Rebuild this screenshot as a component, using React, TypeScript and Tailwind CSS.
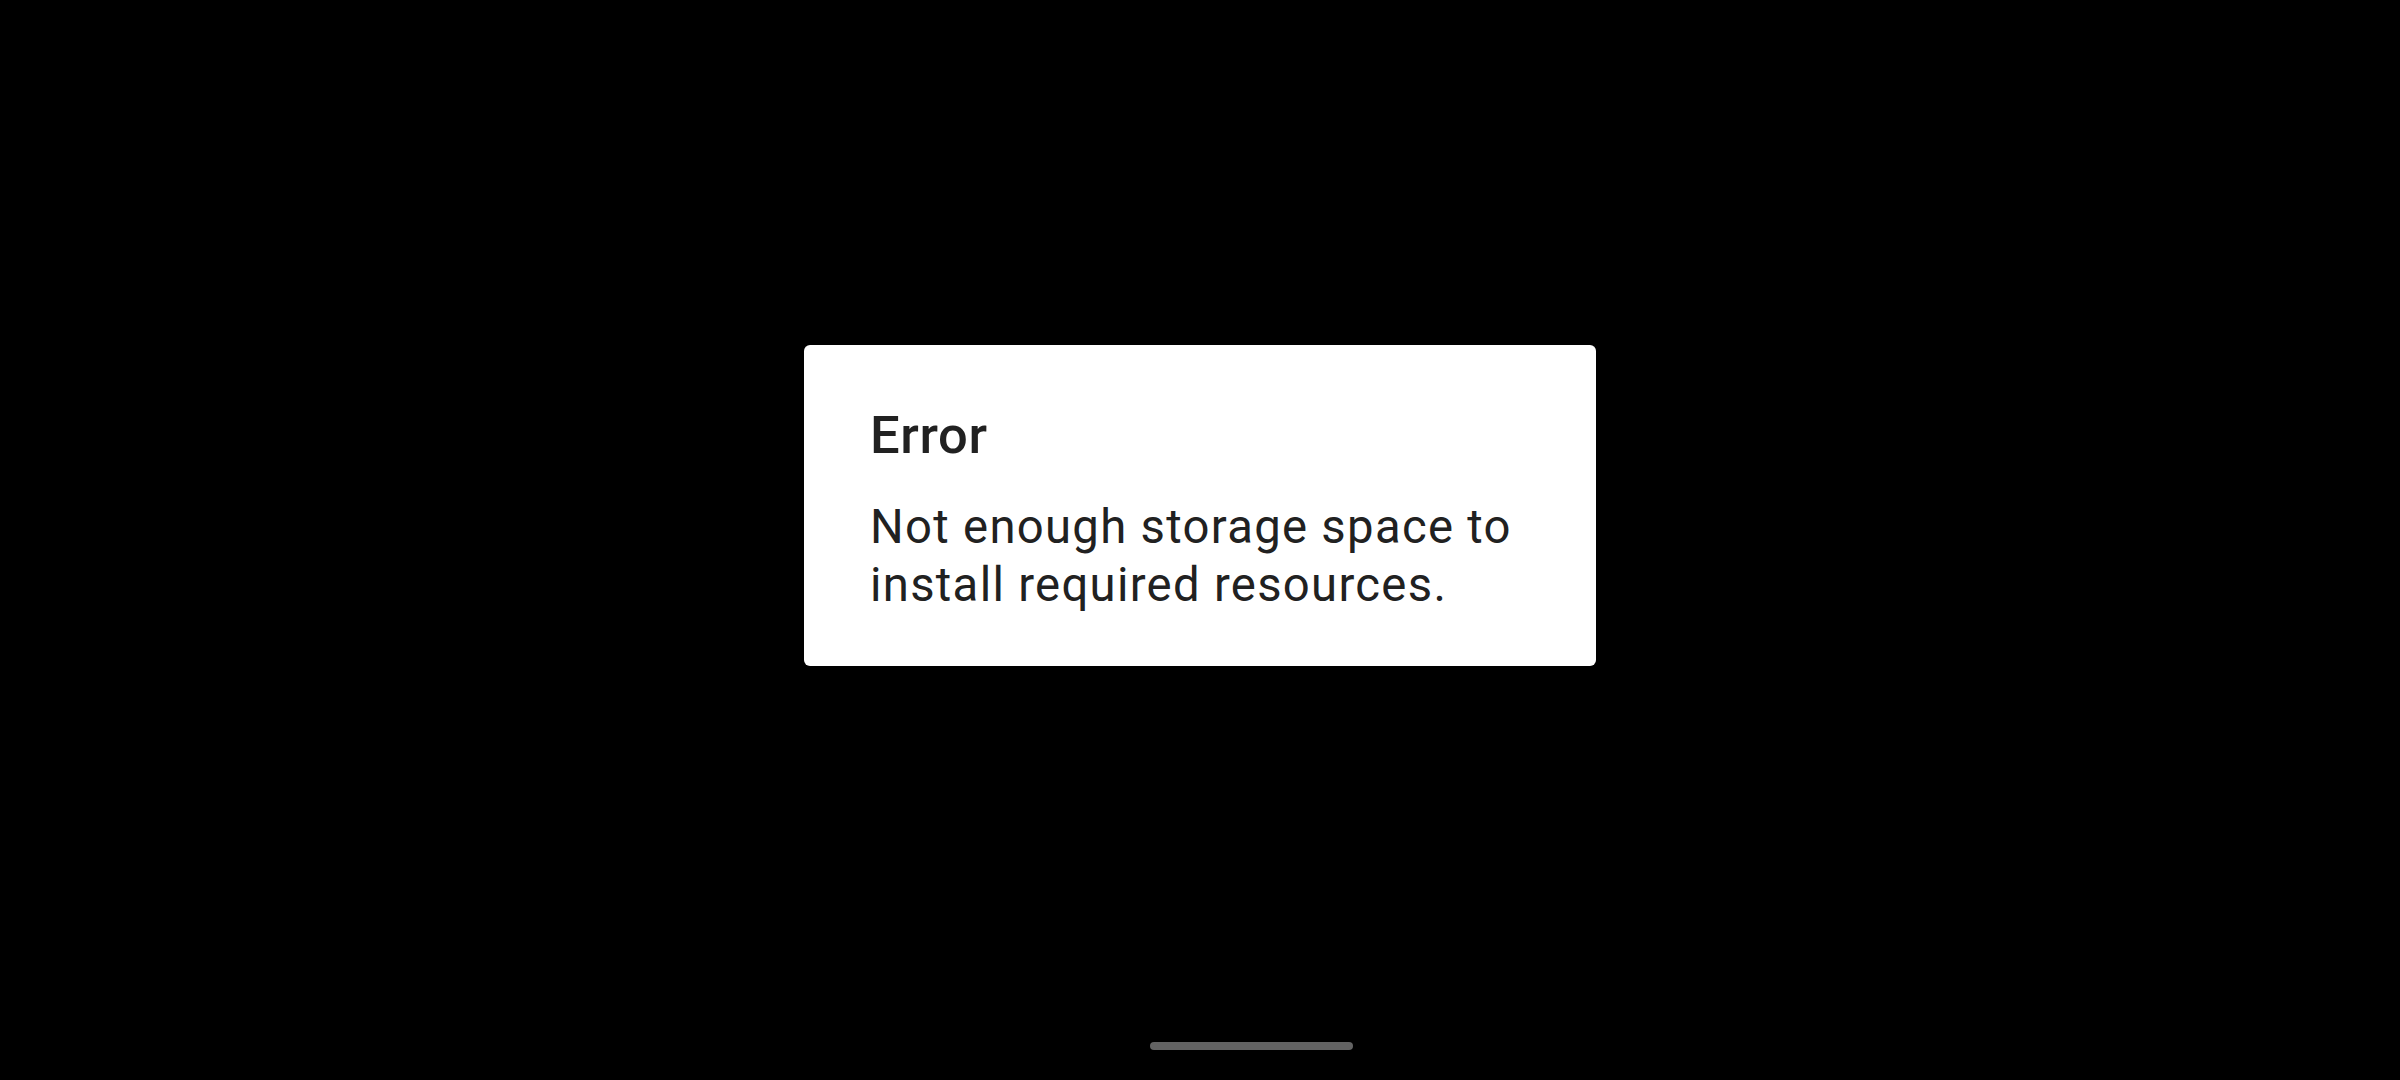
import React from "react";

export default function App() {
  return (
    <div className="w-[2400px] h-[1080px] bg-black flex flex-col overflow-hidden" style={{ fontFamily: "Roboto, 'Noto Sans', sans-serif" }}>
      <div className="mt-[345px] mx-auto w-[792px] bg-white rounded-[6px] pl-[66px] pr-[60px] pt-[58px] pb-[52px] text-[#212121]">
        <div className="text-[52.5px] leading-[64px] font-medium tracking-[0.0125em]">Error</div>
        <div className="mt-[31px] text-[47.25px] leading-[58px] font-normal tracking-[0.0275em]">
          Not enough storage space to install required resources.
        </div>
      </div>
      <div className="flex-1" />
      <div className="ml-[1150px] mb-[30px] w-[203px] h-[8px] rounded-full bg-[#636363]" />
    </div>
  );
}
